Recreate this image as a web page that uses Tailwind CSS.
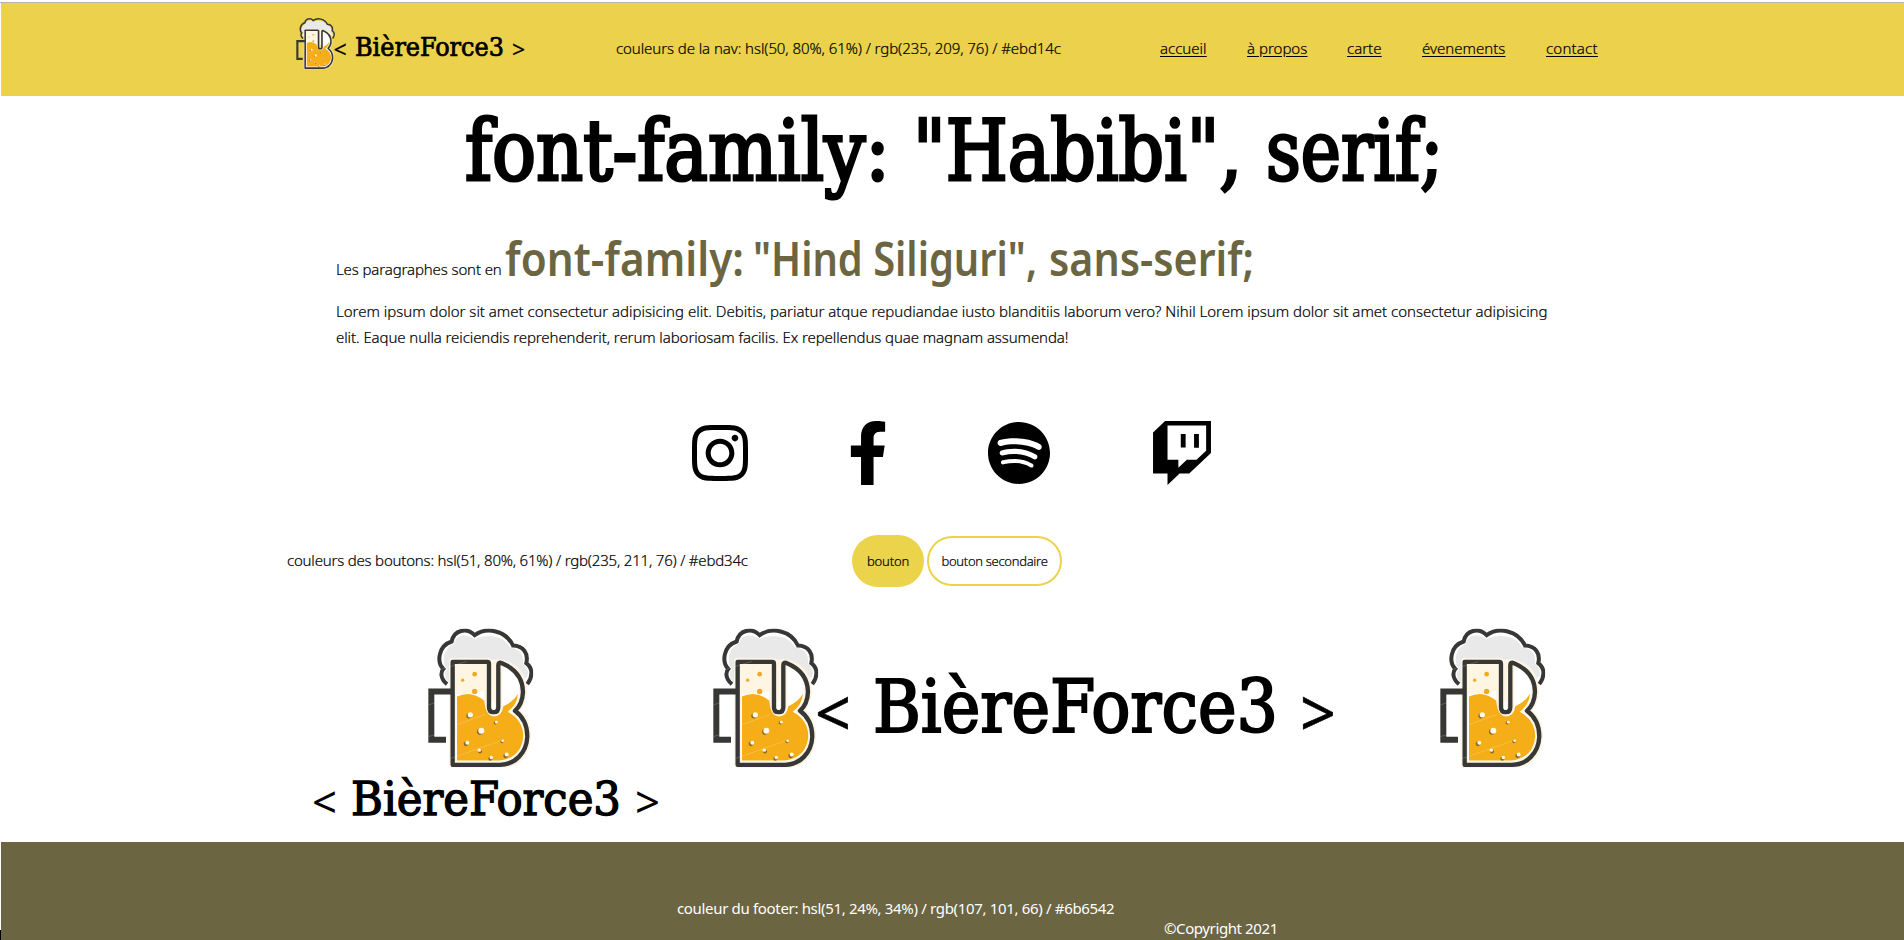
<!DOCTYPE html>
<html lang="fr">
<head>
<meta charset="utf-8">
<title>BièreForce3</title>
<script src="https://cdn.jsdelivr.net/npm/@tailwindcss/browser@4"></script>
</head>
<body class="h-[940px] overflow-hidden bg-white font-['Noto_Sans',sans-serif] text-[15px] leading-[26px] font-light text-black">
<svg class="hidden" aria-hidden="true">
  <symbol id="mug" viewBox="84 56 316 418">
    <path d="M146 218C130 200 132 185 142 180C124 160 128 115 162 102C168 72 202 72 224 88C262 70 312 78 330 112C362 118 372 136 369 162C388 178 388 196 376 206C362 176 334 160 302 150H156Z" fill="#e9e9e9"/>
    <path d="M141 223C120 206 122 186 130 177C110 158 114 108 155 95C162 60 200 52 224 76C260 50 318 62 339 107C370 108 386 130 379 160C400 176 398 202 382 223" fill="none" stroke="#373735" stroke-width="12"/>
    <path d="M158 155H264V300Q281 320 296 300V158Q370 170 370 250Q366 284 346 303Q384 330 382 382Q376 460 300 465H158Z" fill="#fff" stroke="#fdf3e2" stroke-width="22" stroke-linejoin="round"/>
    <path d="M165 164H262V240L220 252H165ZM275 150H288V270L275 276Z" fill="#fef5e3"/>
    <path d="M171 260Q214 240 253 273Q256 319 282 320Q306 318 310 289Q338 278 354 252Q352 285 323 306Q370 330 370 380Q364 444 300 452H171Z" fill="#f5ae18"/>
    <path d="M158 464V156H262Q267 156 267 162V292Q267 307 281 307Q295 307 295 292V166Q295 156 306 160Q368 186 369 246Q368 282 345 303Q382 330 382 380C380 430 344 465 300 465H158Z" fill="none" stroke="#373735" stroke-width="13" stroke-linejoin="round"/>
    <path d="M158 245H94V390H138" fill="none" stroke="#373735" stroke-width="18"/>
    <g fill="#f2a91f"><circle cx="224" cy="193" r="7"/><circle cx="188" cy="211" r="5"/><circle cx="224" cy="245" r="8"/></g>
    <g fill="#8a6a2a"><circle cx="207" cy="318" r="8"/><circle cx="240" cy="366" r="9"/><circle cx="198" cy="402" r="7"/><circle cx="240" cy="425" r="6"/><circle cx="286" cy="339" r="5"/><circle cx="306" cy="395" r="5"/><circle cx="271" cy="447" r="6"/><circle cx="317" cy="438" r="7"/></g>
    <g fill="#fff8ea"><circle cx="211" cy="315" r="8"/><circle cx="244" cy="363" r="9"/><circle cx="202" cy="399" r="6"/><circle cx="238" cy="421" r="5"/><circle cx="289" cy="337" r="4"/><circle cx="308" cy="393" r="4"/><circle cx="274" cy="443" r="5"/><circle cx="320" cy="434" r="6"/></g>
    <path d="M86 285L152 264M170 345L255 314M86 380L152 362M152 446L305 392M125 178L200 155" stroke="#fff" stroke-opacity=".4" stroke-width="1.5"/>
  </symbol>
  <symbol id="wide" viewBox="0 0 622 140" overflow="visible">
    <use href="#mug" x="0" y="0" width="105.3" height="139.3"/>
    <g font-family="'Noto Sans',sans-serif" font-size="66" font-weight="400" stroke="#000" stroke-width=".5">
      <text x="102" y="108" textLength="36" lengthAdjust="spacingAndGlyphs">&lt;</text>
      <text x="587" y="108" textLength="36" lengthAdjust="spacingAndGlyphs">&gt;</text>
    </g>
    <text x="160" y="103" font-family="'DejaVu Serif Condensed','DejaVu Serif',serif" font-size="72" font-weight="400" stroke="#000" stroke-width="2" textLength="405" lengthAdjust="spacingAndGlyphs">BièreForce3</text>
  </symbol>
</svg>

<div class="flex h-[3px] flex-col justify-end"><div class="h-px bg-[#b5b5ac]"></div></div>
<nav class="ml-px flex h-[93px] bg-[#ebd14c] [-webkit-text-stroke:0.2px]">
  <svg class="mt-[15px] ml-[295px] h-[52px] w-[229px] shrink-0 overflow-visible"><use href="#wide" width="229" height="51.5"/></svg>
  <p class="mt-8 ml-[91px] w-[544px] shrink-0 tracking-[-0.08px] whitespace-nowrap">couleurs de la nav: hsl(50, 80%, 61%) / rgb(235, 209, 76) / #ebd14c</p>
  <div class="mt-8 flex gap-10 whitespace-nowrap underline underline-offset-2">
    <a class="w-[47px]">accueil</a><a class="w-[60px]">à propos</a><a class="w-[35px]">carte</a><a class="w-[84px]">évenements</a><a class="tracking-[0.2px]">contact</a>
  </div>
</nav>

<main class="ml-px flex h-[746px] flex-col pt-px">
  <h1 class="ml-[462px]">
    <svg class="block h-28 w-[985px] overflow-visible" font-family="'DejaVu Serif Condensed','DejaVu Serif',serif" font-size="84" font-weight="400" stroke="#000" stroke-width="3">
      <text x="2" y="83" textLength="425" lengthAdjust="spacingAndGlyphs">font-family:</text>
      <text x="450" y="83" textLength="329" lengthAdjust="spacingAndGlyphs">"Habibi",</text>
      <text x="803" y="83" textLength="177" lengthAdjust="spacingAndGlyphs">serif;</text>
    </svg>
  </h1>
  <section class="mt-4 ml-[335px] [-webkit-text-stroke:0.2px]">
    <div class="flex">
      <p class="mt-[31px] w-[167px] tracking-[-0.12px] whitespace-nowrap">Les paragraphes sont en</p>
      <svg class="block h-[73px] w-[760px] overflow-visible" font-family="'Noto Sans',sans-serif" font-size="46" font-weight="600" fill="#6b6542">
        <text class="[-webkit-text-stroke:0]" x="2" y="50.5" textLength="239" lengthAdjust="spacingAndGlyphs">font-family:</text>
        <text class="[-webkit-text-stroke:0]" x="250" y="50.5" textLength="284" lengthAdjust="spacingAndGlyphs">"Hind Siliguri",</text>
        <text class="[-webkit-text-stroke:0]" x="546" y="50.5" textLength="205" lengthAdjust="spacingAndGlyphs">sans-serif;</text>
      </svg>
    </div>
    <p class="tracking-[-0.01px] whitespace-nowrap">Lorem ipsum dolor sit amet consectetur adipisicing elit. Debitis, pariatur atque repudiandae iusto blanditiis laborum vero? Nihil Lorem ipsum dolor sit amet consectetur adipisicing</p>
    <p class="tracking-[-0.09px] whitespace-nowrap">elit. Eaque nulla reiciendis reprehenderit, rerum laboriosam facilis. Ex repellendus quae magnam assumenda!</p>
  </section>

  <div class="mt-[71px] ml-[691px] flex gap-[100px]">
    <svg class="h-16 w-14" viewBox="0 0 448 512"><path d="M224.1 141c-63.6 0-114.9 51.3-114.9 114.9s51.3 114.9 114.9 114.9S339 319.5 339 255.9 287.7 141 224.1 141zm0 189.6c-41.1 0-74.7-33.5-74.7-74.7s33.5-74.7 74.7-74.7 74.7 33.5 74.7 74.7-33.6 74.7-74.7 74.7zm146.4-194.3c0 14.9-12 26.8-26.8 26.8-14.9 0-26.8-12-26.8-26.8s12-26.8 26.8-26.8 26.8 12 26.8 26.8zm76.1 27.2c-1.7-35.9-9.9-67.7-36.2-93.9-26.2-26.2-58-34.4-93.9-36.2-37-2.1-147.9-2.1-184.9 0-35.8 1.7-67.6 9.9-93.9 36.1s-34.4 58-36.2 93.9c-2.1 37-2.1 147.9 0 184.9 1.7 35.9 9.9 67.7 36.2 93.9s58 34.4 93.9 36.2c37 2.1 147.9 2.1 184.9 0 35.9-1.7 67.7-9.9 93.9-36.2 26.2-26.2 34.4-58 36.2-93.9 2.1-37 2.1-147.8 0-184.8zM398.8 388c-7.8 19.6-22.9 34.7-42.6 42.6-29.5 11.7-99.5 9-132.1 9s-102.7 2.6-132.1-9c-19.6-7.8-34.7-22.9-42.6-42.6-11.7-29.5-9-99.5-9-132.1s-2.6-102.7 9-132.1c7.8-19.6 22.9-34.7 42.6-42.6 29.5-11.7 99.5-9 132.1-9s102.7-2.6 132.1 9c19.6 7.8 34.7 22.9 42.6 42.6 11.7 29.5 9 99.5 9 132.1s2.7 102.7-9 132.1z"/></svg>
    <svg class="h-16 w-10" viewBox="0 0 320 512"><path d="M279.14 288l14.22-92.66h-88.91v-60.13c0-25.35 12.42-50.06 52.24-50.06h40.42V6.26S260.43 0 225.36 0c-73.22 0-121.08 44.38-121.08 124.72v70.62H22.89V288h81.39v224h100.17V288z"/></svg>
    <svg class="h-16 w-[62px]" viewBox="0 0 496 512"><path d="M248 8C111.1 8 0 119.1 0 256s111.1 248 248 248 248-111.1 248-248S384.9 8 248 8zm100.7 364.9c-4.2 0-6.8-1.3-10.7-3.6-62.4-37.6-135-39.2-206.7-24.5-3.9 1-9 2.6-11.9 2.6-9.7 0-15.8-7.7-15.8-15.8 0-10.3 6.1-15.2 13.6-16.8 81.9-18.1 165.6-16.5 237 26.2 6.1 3.9 9.7 7.4 9.7 16.5s-7.1 15.4-15.2 15.4zm26.9-65.6c-5.2 0-8.7-2.3-12.3-4.2-62.5-37-155.7-51.9-238.6-29.4-4.8 1.3-7.4 2.6-11.9 2.6-10.7 0-19.4-8.7-19.4-19.4s5.2-17.8 15.5-20.7c27.8-7.8 56.2-13.6 97.8-13.6 64.9 0 127.6 16.1 177 45.5 8.1 4.8 11.3 11 11.3 19.7-.1 10.8-8.5 19.5-19.4 19.5zm31-76.2c-5.2 0-8.4-1.3-12.9-3.9-71.2-42.5-198.5-52.7-280.9-29.7-3.6 1-8.1 2.6-12.9 2.6-13.2 0-23.3-10.3-23.3-23.6 0-13.6 8.4-21.3 17.4-23.9 35.2-10.3 74.6-15.2 117.5-15.2 73 0 149.5 15.2 205.4 47.8 7.8 4.5 12.9 10.7 12.9 22.6 0 13.6-11 23.3-23.2 23.3z"/></svg>
    <svg class="h-16 w-16" viewBox="0 0 512 512"><path d="M391.17,103.47H352.54v109.7h38.63ZM285,103H246.37V212.75H285ZM120.83,0,24.31,91.42V420.58H140.14V512l96.53-91.42h77.25L487.69,256V0ZM449.07,237.75l-77.22,73.12H294.61l-67.6,64v-64H140.14V36.58H449.07Z"/></svg>
  </div>

  <div class="mt-[50px] ml-[286px] flex h-[52px] items-center [-webkit-text-stroke:0.2px]">
    <p class="w-[565px] pb-0.5 tracking-[-0.2px] whitespace-nowrap">couleurs des boutons: hsl(51, 80%, 61%) / rgb(235, 211, 76) / #ebd34c</p>
    <button class="h-[52px] w-[72px] rounded-[26px] bg-[#ebd34c] text-[13px] tracking-[-0.15px]">bouton</button>
    <button class="ml-[3px] h-[50px] w-[135px] rounded-[25px] border-2 border-[#ebd34c] text-[13px] tracking-[-0.3px] whitespace-nowrap">bouton secondaire</button>
  </div>

  <div class="mt-[41px] ml-[311px] flex items-start">
    <svg class="h-[200px] w-[350px] overflow-visible">
      <use href="#mug" x="116" y="0.5" width="105.3" height="139.3"/>
      <g font-family="'Noto Sans',sans-serif" font-size="43" font-weight="400">
        <text x="0" y="190" textLength="25" lengthAdjust="spacingAndGlyphs">&lt;</text>
        <text x="323" y="190" textLength="25" lengthAdjust="spacingAndGlyphs">&gt;</text>
      </g>
      <text x="39" y="187" font-family="'DejaVu Serif Condensed','DejaVu Serif',serif" font-size="47" font-weight="400" stroke="#000" stroke-width="1.3" textLength="270" lengthAdjust="spacingAndGlyphs">BièreForce3</text>
    </svg>
    <svg class="ml-[51px] h-[141px] w-[624px] overflow-visible"><use href="#wide" y="0.5" width="622" height="140"/></svg>
    <svg class="ml-[103px] h-[141px] w-[106px]"><use href="#mug" y="0.5" width="105.3" height="139.3"/></svg>
  </div>
</main>

<div class="flex h-[98px]">
  <div class="flex w-px shrink-0 flex-col justify-end"><div class="h-[10px] bg-black"></div></div>
  <footer class="flex grow bg-[#6b6542] font-normal whitespace-nowrap text-white">
    <p class="mt-[53px] ml-[676px] w-[487px] tracking-[-0.33px]">couleur du footer: hsl(51, 24%, 34%) / rgb(107, 101, 66) / #6b6542</p>
    <p class="mt-[73px] tracking-[-0.4px]">©Copyright 2021</p>
  </footer>
</div>
</body>
</html>
